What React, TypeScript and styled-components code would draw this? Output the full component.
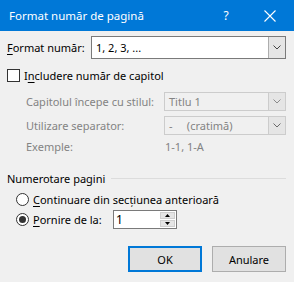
import React from "react";
import styled, { createGlobalStyle } from "styled-components";

const Global = createGlobalStyle`
  html, body {
    margin: 0;
    padding: 0;
    background: #f0f0f0;
  }
  body {
    font-family: "Noto Sans", "Open Sans", sans-serif;
    font-size: 11px;
  }
`;

const Dialog = styled.div`
  width: 294px;
  height: 282px;
  background: #f0f0f0;
  display: flex;
  flex-direction: column;
  overflow: hidden;
  box-sizing: border-box;
`;

const TitleBar = styled.div`
  height: 31px;
  background: #0078d7;
  color: #fff;
  display: flex;
  align-items: center;
  padding: 0 0 0 9px;
  font-size: 11.5px;
`;

const TitleText = styled.div`
  flex: 1;
  margin-top: -1px;
`;

const TitleButton = styled.div<{ $w: number }>`
  width: ${(p) => p.$w}px;
  height: 31px;
  display: flex;
  align-items: center;
  justify-content: center;
  font-size: 12px;
`;

const Body = styled.div`
  flex: 1;
  display: flex;
  flex-direction: column;
  padding: 5px 8px 0 7px;
  color: #000;
`;

const Row = styled.div<{ $h: number; $mt?: number; $indent?: number }>`
  height: ${(p) => p.$h}px;
  margin-top: ${(p) => p.$mt || 0}px;
  padding-left: ${(p) => p.$indent || 0}px;
  display: flex;
  align-items: center;
`;

const Label = styled.div<{ $w?: number; $disabled?: boolean }>`
  width: ${(p) => (p.$w ? `${p.$w}px` : "auto")};
  flex-shrink: 0;
  color: ${(p) => (p.$disabled ? "#838383" : "#000")};
  white-space: nowrap;
`;

const U = styled.span`
  text-decoration: underline;
  text-underline-offset: 2px;
`;

const Combo = styled.div<{ $disabled?: boolean; $h: number }>`
  flex: 1;
  height: ${(p) => p.$h}px;
  box-sizing: border-box;
  border: 1px solid ${(p) => (p.$disabled ? "#cccccc" : "#7a7a7a")};
  background: ${(p) => (p.$disabled ? "#f0f0f0" : "#fff")};
  color: ${(p) => (p.$disabled ? "#838383" : "#000")};
  display: flex;
  align-items: stretch;
`;

const ComboValue = styled.div`
  flex: 1;
  display: flex;
  align-items: center;
  padding-left: 4px;
  white-space: pre;
`;

const DropButton = styled.div<{ $disabled?: boolean }>`
  width: 16px;
  background: #e5e5e5;
  border-left: 1px solid ${(p) => (p.$disabled ? "#cccccc" : "#adadad")};
  display: flex;
  align-items: center;
  justify-content: center;
`;

const CheckBox = styled.div`
  width: 13px;
  height: 13px;
  box-sizing: border-box;
  border: 1px solid #333;
  background: #fff;
  margin-right: 4px;
`;

const Radio = styled.div<{ $checked?: boolean }>`
  width: 13px;
  height: 13px;
  box-sizing: border-box;
  border: 1px solid #333;
  border-radius: 50%;
  background: #fff;
  margin: 0 4px 0 9px;
  display: flex;
  align-items: center;
  justify-content: center;
  &::after {
    content: "";
    display: ${(p) => (p.$checked ? "block" : "none")};
    width: 7px;
    height: 7px;
    border-radius: 50%;
    background: #333;
  }
`;

const GroupHeader = styled.div`
  height: 16px;
  margin-top: 16px;
  display: flex;
  align-items: center;
  gap: 6px;
`;

const GroupLine = styled.div`
  flex: 1;
  height: 1px;
  background: #dcdcdc;
  margin-top: 1px;
`;

const Spin = styled.div`
  width: 64px;
  height: 19px;
  box-sizing: border-box;
  border: 1px solid #7a7a7a;
  background: #fff;
  display: flex;
  margin-left: 16px;
`;

const SpinValue = styled.div`
  flex: 1;
  display: flex;
  align-items: center;
  padding-left: 2px;
  font-size: 12px;
`;

const SpinButtons = styled.div`
  width: 15px;
  display: flex;
  flex-direction: column;
  gap: 1px;
  padding: 1px 1px 1px 0;
`;

const SpinButton = styled.div`
  flex: 1;
  background: #e5e5e5;
  border: 1px solid #cfcfcf;
  display: flex;
  align-items: center;
  justify-content: center;
`;

const Buttons = styled.div`
  display: flex;
  justify-content: flex-end;
  gap: 10px;
  margin-top: 17px;
`;

const Button = styled.div<{ $default?: boolean }>`
  width: 74px;
  height: 26px;
  box-sizing: border-box;
  background: #e1e1e1;
  border: ${(p) => (p.$default ? "2px solid #0078d7" : "1px solid #adadad")};
  display: flex;
  align-items: center;
  justify-content: center;
`;

const Chevron = ({ color }: { color: string }) => (
  <svg width="8" height="5" viewBox="0 0 8 5">
    <path d="M0.5 0.5 L4 4 L7.5 0.5" fill="none" stroke={color} strokeWidth="1" />
  </svg>
);

const Triangle = ({ up }: { up?: boolean }) => (
  <svg width="5" height="3" viewBox="0 0 5 3">
    <path d={up ? "M0 3 L2.5 0 L5 3 Z" : "M0 0 L2.5 3 L5 0 Z"} fill="#000" />
  </svg>
);

const App = () => {
  return (
    <Dialog>
      <Global />
      <TitleBar>
        <TitleText>Format număr de pagină</TitleText>
        <TitleButton $w={40}>?</TitleButton>
        <TitleButton $w={48}>
          <svg width="12" height="12" viewBox="0 0 12 12">
            <path d="M0.5 0.5 L11.5 11.5 M11.5 0.5 L0.5 11.5" stroke="#fff" strokeWidth="1.1" />
          </svg>
        </TitleButton>
      </TitleBar>
      <Body>
        <Row $h={23}>
          <Label $w={84}>
            <U>F</U>ormat număr:
          </Label>
          <Combo $h={23}>
            <ComboValue>1, 2, 3, ...</ComboValue>
            <DropButton>
              <Chevron color="#444" />
            </DropButton>
          </Combo>
        </Row>
        <Row $h={14} $mt={9}>
          <CheckBox />
          <Label>
            I<U>n</U>cludere număr de capitol
          </Label>
        </Row>
        <Row $h={19} $mt={10} $indent={19}>
          <Label $w={138} $disabled>
            Capitolul începe cu stilul:
          </Label>
          <Combo $h={19} $disabled>
            <ComboValue>Titlu 1</ComboValue>
            <DropButton $disabled>
              <Chevron color="#8a8a8a" />
            </DropButton>
          </Combo>
        </Row>
        <Row $h={19} $mt={5} $indent={19}>
          <Label $w={138} $disabled>
            Utilizare separator:
          </Label>
          <Combo $h={19} $disabled>
            <ComboValue>{"-     (cratimă)"}</ComboValue>
            <DropButton $disabled>
              <Chevron color="#6a6a6a" />
            </DropButton>
          </Combo>
        </Row>
        <Row $h={16} $mt={3} $indent={19}>
          <Label $w={139} $disabled>
            Exemple:
          </Label>
          <Label $disabled>1-1, 1-A</Label>
        </Row>
        <GroupHeader>
          <Label>Numerotare pagini</Label>
          <GroupLine />
        </GroupHeader>
        <Row $h={16} $mt={5}>
          <Radio />
          <Label>
            <U>C</U>ontinuare din secțiunea anterioară
          </Label>
        </Row>
        <Row $h={19} $mt={3}>
          <Radio $checked />
          <Label $w={64}>
            <U>P</U>ornire de la:
          </Label>
          <Spin>
            <SpinValue>1</SpinValue>
            <SpinButtons>
              <SpinButton>
                <Triangle up />
              </SpinButton>
              <SpinButton>
                <Triangle />
              </SpinButton>
            </SpinButtons>
          </Spin>
        </Row>
        <Buttons>
          <Button $default>OK</Button>
          <Button>Anulare</Button>
        </Buttons>
      </Body>
    </Dialog>
  );
};

export default App;
